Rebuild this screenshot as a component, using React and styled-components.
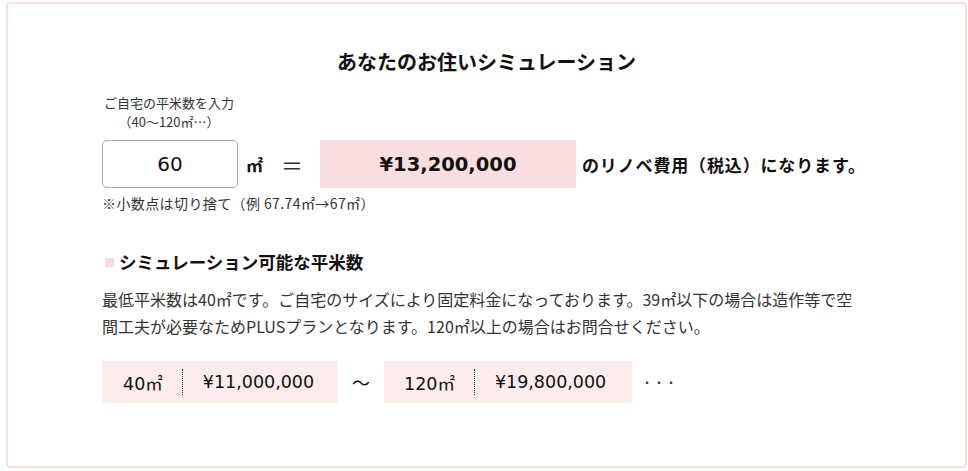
import React from "react";
import styled, { createGlobalStyle } from "styled-components";

const Global = createGlobalStyle`
  html, body { margin: 0; padding: 0; background: #fff; }
  body { font-family: "Noto Sans CJK JP", "Noto Sans", sans-serif; color: #333; }
`;

const Frame = styled.div`
  box-sizing: border-box;
  margin: 2px 0 0 6px;
  width: 961px;
  height: 466px;
  border: 2px solid #fadcdc;
  border-radius: 4px;
  padding: 44px 0 0 94px;
  display: flex;
  flex-direction: column;
  align-items: flex-start;
`;

const Title = styled.h2`
  align-self: stretch;
  margin: 0 94px 0 0;
  font-size: 20px;
  line-height: 28px;
  font-weight: 700;
  color: #111;
  text-align: center;
`;

const InputLabel = styled.div`
  margin-top: 17px;
  width: 134px;
  font-size: 13px;
  line-height: 19px;
  text-align: center;
  color: #333;
`;

const CalcRow = styled.div`
  margin-top: 9px;
  display: flex;
  align-items: center;
  height: 48px;
`;

const AreaInput = styled.div`
  box-sizing: border-box;
  width: 136px;
  height: 48px;
  border: 1px solid #a9a9a9;
  border-radius: 5px;
  display: flex;
  align-items: center;
  justify-content: center;
  font-family: "DejaVu Sans", sans-serif;
  font-size: 20px;
  color: #111;
`;

const Unit = styled.span`
  margin-left: 8px;
  font-size: 17px;
  font-weight: 700;
  color: #111;
`;

const Equals = styled.span`
  margin: 0 17px 0 18px;
  font-size: 22px;
  color: #333;
`;

const PriceBox = styled.div`
  width: 256px;
  height: 48px;
  background: #fadedf;
  display: flex;
  align-items: center;
  justify-content: center;
  font-family: "DejaVu Sans", sans-serif;
  font-size: 19.5px;
  font-weight: 700;
  color: #111;
`;

const Result = styled.span`
  margin-left: 6px;
  font-size: 17px;
  letter-spacing: 0.85px;
  font-weight: 700;
  color: #111;
`;

const Note = styled.div`
  margin-top: 6px;
  font-size: 14px;
  letter-spacing: 0.4px;
  line-height: 19px;
  color: #333;
`;

const Heading = styled.h3`
  margin: 37px 0 0 0;
  display: flex;
  align-items: center;
  font-size: 17.5px;
  line-height: 24px;
  font-weight: 700;
  color: #111;
  &::before {
    content: "";
    width: 9px;
    height: 9px;
    background: #fadcdc;
    margin: 1px 5px 0 3px;
  }
`;

const Paragraph = styled.p`
  margin: 12px 0 0 0;
  width: 762px;
  font-size: 16px;
  line-height: 27px;
  color: #333;
`;

const RangeRow = styled.div`
  margin-top: 21px;
  display: flex;
  align-items: center;
`;

const RangeBox = styled.div`
  box-sizing: border-box;
  height: 42px;
  width: ${(p) => p.$w}px;
  background: #fdecec;
  display: flex;
  align-items: center;
  padding-left: ${(p) => p.$pl}px;
  font-family: "DejaVu Sans", "Noto Sans CJK JP", sans-serif;
  font-size: 17.5px;
  color: #111;
`;

const Area = styled.span`
  display: flex;
  align-items: baseline;
`;

const Sep = styled.span`
  height: 26px;
  border-left: 1px dotted #222;
  margin: 0 20px 0 ${(p) => p.$ml}px;
`;

const Tilde = styled.span`
  width: 46px;
  text-align: center;
  font-size: 18px;
  color: #111;
`;

const Ellipsis = styled.span`
  margin-left: 9px;
  font-size: 12px;
  color: #333;
`;

function Range({ area, price, w, pl, ml }) {
  return (
    <RangeBox $w={w} $pl={pl}>
      <Area>{area}㎡</Area>
      <Sep $ml={ml} />
      <span>{price}</span>
    </RangeBox>
  );
}

export default function App() {
  return (
    <>
      <Global />
      <Frame>
        <Title>あなたのお住いシミュレーション</Title>
        <InputLabel>
          ご自宅の平米数を入力
          <br />
          （40〜120㎡…）
        </InputLabel>
        <CalcRow>
          <AreaInput>60</AreaInput>
          <Unit>㎡</Unit>
          <Equals>＝</Equals>
          <PriceBox>¥13,200,000</PriceBox>
          <Result>のリノベ費用（税込）になります。</Result>
        </CalcRow>
        <Note>※小数点は切り捨て（例 67.74㎡→67㎡）</Note>
        <Heading>シミュレーション可能な平米数</Heading>
        <Paragraph>
          最低平米数は40㎡です。ご自宅のサイズにより固定料金になっております。39㎡以下の場合は造作等で空間工夫が必要なためPLUSプランとなります。120㎡以上の場合はお問合せください。
        </Paragraph>
        <RangeRow>
          <Range area="40" price="¥11,000,000" w={236} pl={21} ml={19} />
          <Tilde>〜</Tilde>
          <Range area="120" price="¥19,800,000" w={248} pl={20} ml={19} />
          <Ellipsis>・・・</Ellipsis>
        </RangeRow>
      </Frame>
    </>
  );
}
